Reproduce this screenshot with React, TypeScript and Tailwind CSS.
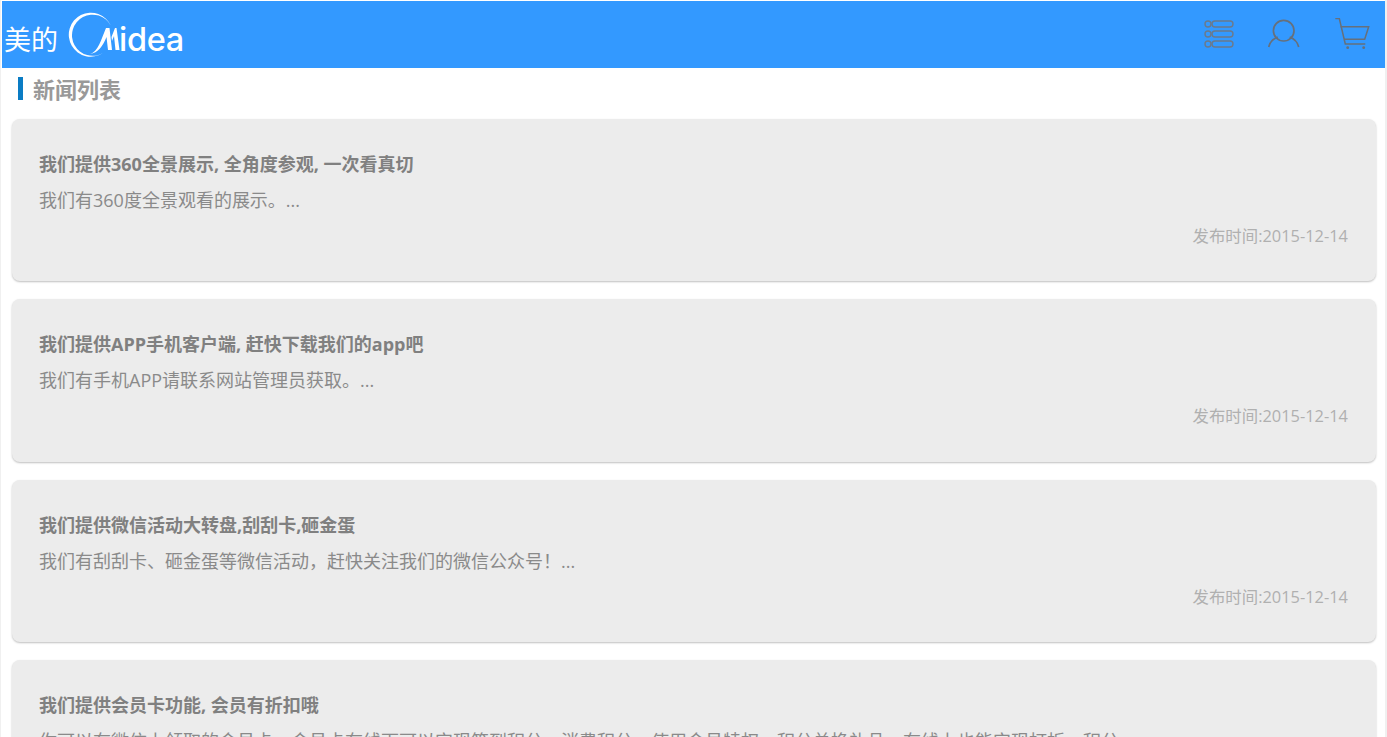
const news = [
  {
    title: "我们提供360全景展示, 全角度参观, 一次看真切",
    desc: "我们有360度全景观看的展示。...",
  },
  {
    title: "我们提供APP手机客户端, 赶快下载我们的app吧",
    desc: "我们有手机APP请联系网站管理员获取。...",
  },
  {
    title: "我们提供微信活动大转盘,刮刮卡,砸金蛋",
    desc: "我们有刮刮卡、砸金蛋等微信活动，赶快关注我们的微信公众号！...",
  },
  {
    title: "我们提供会员卡功能, 会员有折扣哦",
    desc: "你可以在微信上领取的会员卡，会员卡在线下可以实现签到积分，消费积分，使用会员特权，积分兑换礼品，在线上也能实现打折、积分...",
  },
];

function Logo() {
  return (
    <div className="flex items-start text-white">
      <span className="mt-[24px] ml-[2px] w-[64px] text-[27px] leading-[30px]">美的</span>
      <div className="relative mt-[9px] h-[50px] w-[122px]">
        {/* svg origin is x=68, y=10 on the page */}
        <svg width="56" height="50" viewBox="0 0 56 50" className="absolute left-0 top-0" fill="#fff">
          <path d="M43 16A22 22 0 1 0 35 43A20.600 20.600 0 1 1 43 16Z" />
          <path d="M22 44C30 42 33 30 38 18L41.500 18L44 40L40 40L38.500 27C35 36 30 43 22 44Z" />
          <path d="M43.500 27L47 18L48.500 18L51.500 40L47.500 40L46 26L44 31Z" />
        </svg>
        <span className="absolute left-[51px] top-[12px] font-['Inter',sans-serif] text-[32.5px] leading-[36px] font-medium tracking-[-0.3px]">
          idea
        </span>
      </div>
    </div>
  );
}

function ListIcon() {
  return (
    <svg width="30" height="34" viewBox="0 0 30 34" fill="none" stroke="#6b7a8c" strokeWidth="1.4">
      <circle cx="4" cy="6" r="3" />
      <circle cx="4" cy="16" r="3" />
      <circle cx="4" cy="26" r="3" />
      <rect x="8" y="3" width="21" height="6" rx="3" />
      <rect x="8" y="13" width="21" height="6" rx="3" />
      <rect x="8" y="23" width="21" height="6" rx="3" />
    </svg>
  );
}

function UserIcon() {
  return (
    <svg width="34" height="34" viewBox="0 0 34 34" fill="none" stroke="#66707c" strokeWidth="1.7">
      <circle cx="16.700" cy="12.700" r="10.300" />
      <path d="M1.700 29c1-4.500 4-8 9-10M31.700 29c-1-4.500-4-8-9-10" />
    </svg>
  );
}

function CartIcon() {
  return (
    <svg width="36" height="34" viewBox="0 0 36 34" fill="none" stroke="#66707c" strokeWidth="1.5">
      <path d="M1.300 .5h4l6 25.500h20" />
      <path d="M6.500 8.700h28.200l-4 12.600H10.300" />
      <circle cx="13.700" cy="29.700" r="1.400" fill="#66707c" stroke="none" />
      <circle cx="29.700" cy="29.700" r="1.400" fill="#66707c" stroke="none" />
    </svg>
  );
}

export default function App() {
  return (
    <div className="h-[737px] overflow-hidden border-r-2 border-l border-[#f0f0f0] bg-white pt-px font-['Microsoft_YaHei','Open_Sans','Noto_Sans_CJK_SC',sans-serif]">
      <header className="ml-px flex h-[67px] justify-between bg-[#3399ff]">
        <Logo />
        <div className="flex items-start gap-[33px] pt-[17px] pr-[15px]">
          <ListIcon />
          <UserIcon />
          <CartIcon />
        </div>
      </header>

      <h2 className="mt-[9px] ml-[17px] h-[23px] border-l-[5px] border-[#0a7cc4] pl-[10px] text-[22px] leading-[25px] font-bold text-[#999999]">
        新闻列表
      </h2>

      <div className="mt-[19px] flex flex-col gap-[18px] pr-[9px] pl-[11px]">
        {news.map((item) => (
          <article
            key={item.title}
            className="h-[162.300px] shrink-0 rounded-[8px] bg-[#ececec] pt-[33px] pr-[28px] pl-[27px] shadow-[0_1px_2px_rgba(0,0,0,0.25)]"
          >
            <h3 className="text-[18px] leading-6 font-bold text-[#808080]">{item.title}</h3>
            <p className="mt-3 truncate text-[18px] leading-6 text-[#8a8a8a]">{item.desc}</p>
            <p className="mt-3 text-right text-[16.400px] leading-6 text-[#b0b0b0]">发布时间:2015-12-14</p>
          </article>
        ))}
      </div>
    </div>
  );
}
